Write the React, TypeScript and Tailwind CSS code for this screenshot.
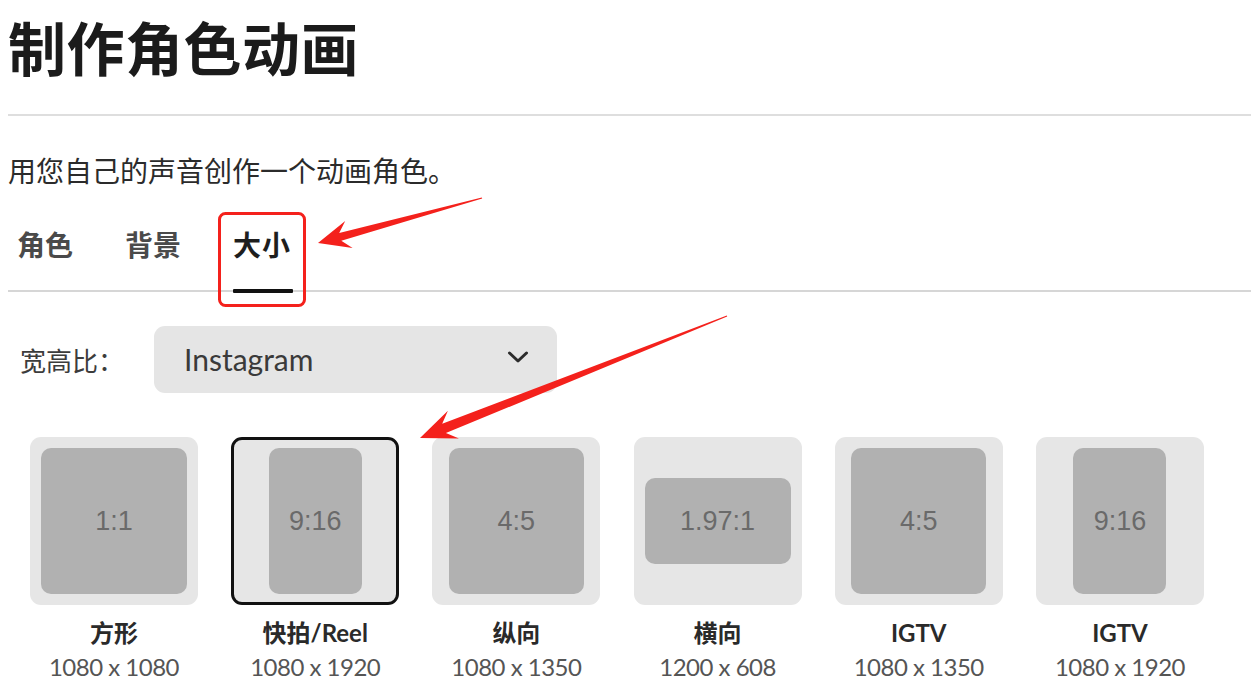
import React from "react";

type Card = { r: string; inner: string; t: string; d: string; sel?: boolean };

const cards: Card[] = [
  { r: "1:1", inner: "w-[146px] h-[146px]", t: "方形", d: "1080 x 1080" },
  { r: "9:16", inner: "w-[93px] h-[146px]", t: "快拍/Reel", d: "1080 x 1920", sel: true },
  { r: "4:5", inner: "w-[135px] h-[146px]", t: "纵向", d: "1080 x 1350" },
  { r: "1.97:1", inner: "w-[146px] h-[86px]", t: "横向", d: "1200 x 608" },
  { r: "4:5", inner: "w-[135px] h-[146px]", t: "IGTV", d: "1080 x 1350" },
  { r: "9:16", inner: "w-[93px] h-[146px]", t: "IGTV", d: "1080 x 1920" },
];

function arrowPoints(
  tx: number,
  ty: number,
  hx: number,
  hy: number,
  headLen: number,
  headHalf: number,
  neckHalf: number,
  tailHalf: number
) {
  const dx = hx - tx;
  const dy = hy - ty;
  const len = Math.hypot(dx, dy);
  const ux = dx / len;
  const uy = dy / len;
  const nx = -uy;
  const ny = ux;
  const nk = { x: hx - ux * headLen * 0.72, y: hy - uy * headLen * 0.72 };
  const bb = { x: hx - ux * headLen, y: hy - uy * headLen };
  const pts = [
    [tx + nx * tailHalf, ty + ny * tailHalf],
    [nk.x + nx * neckHalf, nk.y + ny * neckHalf],
    [bb.x + nx * headHalf, bb.y + ny * headHalf],
    [hx, hy],
    [bb.x - nx * headHalf, bb.y - ny * headHalf],
    [nk.x - nx * neckHalf, nk.y - ny * neckHalf],
    [tx - nx * tailHalf, ty - ny * tailHalf],
  ];
  return pts.map((p) => `${p[0].toFixed(1)},${p[1].toFixed(1)}`).join(" ");
}

export default function App() {
  const cjk = "font-['Noto_Sans_CJK_SC',sans-serif]";
  const latin = "font-['Lato','Noto_Sans_CJK_SC',sans-serif]";
  return (
    <div className={`relative w-[1251px] h-[698px] overflow-hidden bg-white ${cjk}`}>
      <div className="flex flex-col pl-[8px]">
        <h1 className="mt-[14px] text-[58px] font-bold leading-[64px] text-[#1b1b1b] tracking-[0.5px]">
          制作角色动画
        </h1>
        <div className="mt-[36px] h-[2px] bg-[#dedede]" />
        <p className="mt-[36px] text-[28px] leading-[36px] text-[#2b2b2b]">
          用您自己的声音创作一个动画角色。
        </p>
        <div className="mt-[26px] relative flex items-end gap-[52px] pl-[9px] border-b-[2px] border-[#d6d6d6] h-[78px]">
          <div className="pb-[28px] text-[28px] font-bold leading-[36px] text-[#4a4a4a]">角色</div>
          <div className="pb-[28px] text-[28px] font-bold leading-[36px] text-[#4a4a4a]">背景</div>
          <div className="relative pb-[28px] text-[28px] font-bold leading-[36px] text-[#1e1e1e] tracking-[1px]">
            大小
            <div className="absolute left-0 w-[60px] bottom-[-3px] h-[4px] bg-[#111] rounded-[1px]" />
          </div>
        </div>
        <div className="mt-[34px] flex items-center">
          <span className="w-[146px] pl-[12px] text-[26px] leading-[34px] text-[#3c3c3c]">宽高比：</span>
          <div className="w-[403px] h-[67px] rounded-[11px] bg-[#e5e5e5] flex items-center justify-between pl-[30px] pr-[28px]">
            <span className={`${latin} text-[30px] leading-[34px] text-[#3a3a3a] pb-[2px]`}>Instagram</span>
            <svg width="22" height="14" viewBox="0 0 22 14" className="mb-[6px]">
              <path d="M2.5 3 L11 11 L19.5 3" fill="none" stroke="#2c2c2c" strokeWidth="3" strokeLinecap="round" strokeLinejoin="round" />
            </svg>
          </div>
        </div>
        <div className="mt-[44px] pl-[22px] flex gap-[33.2px]">
          {cards.map((c, i) => (
            <div key={i} className="w-[168px] flex flex-col items-center">
              <div
                className={`w-[168px] h-[168px] rounded-[11px] bg-[#e6e6e6] flex items-center justify-center ${
                  c.sel ? "border-[3px] border-[#111]" : ""
                }`}
              >
                <div
                  className={`${c.inner} rounded-[10px] bg-[#b1b1b1] flex items-center justify-center font-['Liberation_Sans',sans-serif] text-[27px] text-[#6a6a6a]`}
                >
                  {c.r}
                </div>
              </div>
              <div className={`${latin} mt-[11px] text-[24px] font-bold leading-[34px] text-[#2a2a2a]`}>{c.t}</div>
              <div className={`${latin} text-[24px] leading-[34px] text-[#555] tracking-[-0.5px]`}>{c.d}</div>
            </div>
          ))}
        </div>
      </div>

      <svg className="absolute inset-0 pointer-events-none" width="1251" height="698">
        <rect x="219.5" y="213.5" width="85" height="92" rx="6" fill="none" stroke="#f4211c" strokeWidth="3" />
        <polygon points={arrowPoints(482, 198, 318, 243, 32, 14, 4, 0.6)} fill="#f4211c" />
        <polygon points={arrowPoints(727, 316, 420, 438, 36, 15, 5, 0.6)} fill="#f4211c" />
      </svg>
    </div>
  );
}
